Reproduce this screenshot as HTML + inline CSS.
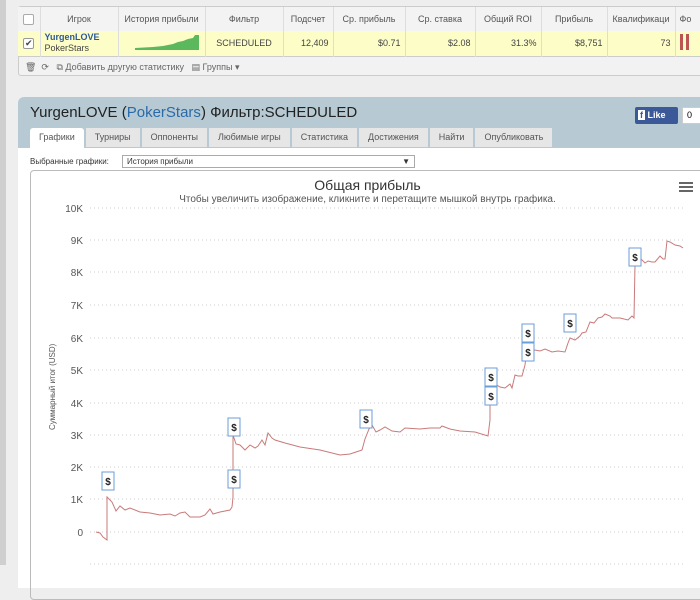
<!DOCTYPE html>
<html><head><meta charset="utf-8"><style>
*{margin:0;padding:0;box-sizing:border-box}
body{width:700px;height:565px;overflow:hidden;background:#eeeeee;font-family:"Liberation Sans","DejaVu Sans",sans-serif;position:relative}
.abs{position:absolute}
table{border-collapse:collapse;font-size:9px;color:#444}
td{border-right:1px solid #ddd;height:24px;padding:0 4px}
</style></head><body>
<div class="abs" style="left:0;top:0;width:6px;height:565px;background:#cfcfcf"></div>
<div class="abs" style="left:18px;top:6px;width:690px;height:70px;background:#f2f2f2;border:1px solid #ccc;border-radius:3px"></div>
<table class="abs" style="left:18px;top:7px;width:690px;table-layout:fixed">
<colgroup><col style="width:22px"><col style="width:78px"><col style="width:87px"><col style="width:78px"><col style="width:50px"><col style="width:72px"><col style="width:70px"><col style="width:66px"><col style="width:66px"><col style="width:68px"><col style="width:33px"></colgroup>
<tr style="background:#f3f3f3;height:23px;text-align:center;color:#555">
<td><div style="width:11px;height:11px;border:1px solid #aaa;background:#fff;border-radius:2px;margin:auto"></div></td>
<td>Игрок</td><td>История прибыли</td><td>Фильтр</td><td>Подсчет</td><td>Ср. прибыль</td><td>Ср. ставка</td><td>Общий ROI</td><td>Прибыль</td><td>Квалификаци</td><td style="text-align:left">Фо</td></tr>
<tr style="background:#fdfdc8;height:25px;border-bottom:1px solid #ccc">
<td><div style="width:11px;height:11px;border:1px solid #999;background:#fff;border-radius:2px;margin:auto;font-size:9px;line-height:9px;text-align:center">✔</div></td>
<td style="line-height:11px"><b style="color:#2c5a9a">YurgenLOVE</b><br>PokerStars</td>
<td><svg width="78" height="20"><polygon points="12,18 12,16 30,15 40,14 50,12 55,10 60,9 65,7 70,6 72,3 76,3 76,18" fill="#5cb85c"/></svg></td>
<td style="text-align:center">SCHEDULED</td><td style="text-align:right">12,409</td><td style="text-align:right">$0.71</td><td style="text-align:right">$2.08</td><td style="text-align:right">31.3%</td><td style="text-align:right">$8,751</td><td style="text-align:right">73</td>
<td><span style="display:inline-block;width:3px;height:16px;background:#b55;margin-right:3px"></span><span style="display:inline-block;width:3px;height:16px;background:#b55"></span></td></tr>
</table>
<div class="abs" style="left:25px;top:62px;font-size:9px;color:#666">🗑 &nbsp;⟳ &nbsp; ⧉ Добавить другую статистику &nbsp; ▤ Группы ▾</div>

<div class="abs" style="left:18px;top:97px;width:690px;height:480px;background:#b7cad3;border-radius:6px 0 0 0"></div>
<div class="abs" style="left:30px;top:104px;font-size:15px;color:#222">YurgenLOVE (<span style="color:#2a6aaa">PokerStars</span>) Фильтр:SCHEDULED</div>
<div class="abs" style="left:635px;top:107px;width:43px;height:17px;background:#3b5998;color:#fff;font-size:9px;font-weight:bold;line-height:17px;padding-left:3px;border-radius:2px"><span style="background:#fff;color:#3b5998;padding:0 2px">f</span> Like</div>
<div class="abs" style="left:682px;top:107px;width:20px;height:17px;background:#fff;border:1px solid #ccc;font-size:9px;line-height:15px;padding-left:4px">0</div>
<div class="abs" style="left:18px;top:148px;width:690px;height:440px;background:#fff"></div>
<div class="abs" style="left:30px;top:128px;font-size:9px;color:#555;display:flex;gap:2px">
<div style="background:#fff;padding:4px 9px;height:20px;border-radius:3px 3px 0 0">Графики</div>
<div style="background:#e6e6e6;padding:4px 9px;height:19px">Турниры</div>
<div style="background:#e6e6e6;padding:4px 9px;height:19px">Оппоненты</div>
<div style="background:#e6e6e6;padding:4px 9px;height:19px">Любимые игры</div>
<div style="background:#e6e6e6;padding:4px 9px;height:19px">Статистика</div>
<div style="background:#e6e6e6;padding:4px 9px;height:19px">Достижения</div>
<div style="background:#e6e6e6;padding:4px 9px;height:19px">Найти</div>
<div style="background:#e6e6e6;padding:4px 9px;height:19px">Опубликовать</div>
</div>
<div class="abs" style="left:30px;top:157px;font-size:8px;color:#333">Выбранные графики:</div>
<div class="abs" style="left:122px;top:155px;width:293px;height:13px;border:1px solid #aaa;font-size:8px;padding-left:4px;line-height:11px;color:#333">История прибыли<span style="position:absolute;right:4px">▼</span></div>
<div class="abs" style="left:30px;top:170px;width:680px;height:430px;border:1px solid #bbb;border-radius:4px"></div>
<div class="abs" style="left:0;top:177px;width:735px;text-align:center;font-size:14px;color:#333">Общая прибыль</div>
<div class="abs" style="left:0;top:194px;width:735px;text-align:center;font-size:10px;color:#555">Чтобы увеличить изображение, кликните и перетащите мышкой внутрь графика.</div>
<div class="abs" style="left:679px;top:182px;width:14px"><div style="height:2px;background:#666;margin-bottom:2px"></div><div style="height:2px;background:#666;margin-bottom:2px"></div><div style="height:2px;background:#666"></div></div>
<svg class="abs" style="left:0;top:0" width="700" height="565">
<g stroke="#ccc" stroke-dasharray="1,3">
<line x1="90" x2="685" y1="208" y2="208"/><line x1="90" x2="685" y1="240" y2="240"/><line x1="90" x2="685" y1="272" y2="272"/><line x1="90" x2="685" y1="305" y2="305"/><line x1="90" x2="685" y1="338" y2="338"/><line x1="90" x2="685" y1="370" y2="370"/><line x1="90" x2="685" y1="403" y2="403"/><line x1="90" x2="685" y1="435" y2="435"/><line x1="90" x2="685" y1="467" y2="467"/><line x1="90" x2="685" y1="499" y2="499"/><line x1="90" x2="685" y1="532" y2="532"/><line x1="90" x2="685" y1="564" y2="564"/>
</g>
<g font-size="10" fill="#555" text-anchor="end">
<text x="83" y="212">10K</text><text x="83" y="244">9K</text><text x="83" y="276">8K</text><text x="83" y="309">7K</text><text x="83" y="342">6K</text><text x="83" y="374">5K</text><text x="83" y="407">4K</text><text x="83" y="439">3K</text><text x="83" y="471">2K</text><text x="83" y="503">1K</text><text x="83" y="536">0</text>
</g>
<text transform="translate(55,430) rotate(-90)" font-size="8" fill="#555">Суммарный итог (USD)</text>
<polyline fill="none" stroke="#c97a7a" stroke-width="1" points="96,532 100,533 103,537 107,540 107,497 112,502 116,511 120,506 125,510 130,508 140,512 150,513 160,515 170,514 175,516 180,513 185,512 190,517 200,517 205,515 210,509 213,514 220,512 230,510 232,507 233,497 233,435 236,444 240,445 245,450 250,445 255,448 258,446 262,440 265,445 268,433 272,438 275,440 285,443 300,447 320,450 340,455 350,454 356,452 362,450 365,439 369,429 372,425 376,432 380,430 385,427 392,431 400,432 405,428 420,429 430,428 440,428 442,426 450,429 460,431 475,432 488,436 490,420 490,398 495,384 500,387 505,388 510,384 512,388 515,375 518,376 522,376 525,365 527,350 532,352 535,350 540,351 545,349 552,352 558,351 565,352 568,343 570,338 575,340 580,336 582,333 586,332 590,322 594,323 598,318 602,317 605,314 610,316 612,318 620,318 628,320 632,316 634,318 635,265 640,258 645,263 648,261 652,262 655,262 660,256 663,259 665,259 667,241 670,242 675,245 680,246 683,248"/>
<g font-size="10" font-weight="bold" fill="#222" text-anchor="middle">
<g><rect x="102" y="472" width="12" height="18" fill="#fff" stroke="#6a9ed8"/><text x="108" y="485">$</text></g>
<g><rect x="228" y="470" width="12" height="18" fill="#fff" stroke="#6a9ed8"/><text x="234" y="483">$</text></g>
<g><rect x="228" y="418" width="12" height="18" fill="#fff" stroke="#6a9ed8"/><text x="234" y="431">$</text></g>
<g><rect x="360" y="410" width="12" height="18" fill="#fff" stroke="#6a9ed8"/><text x="366" y="423">$</text></g>
<g><rect x="485" y="387" width="12" height="18" fill="#fff" stroke="#6a9ed8"/><text x="491" y="400">$</text></g>
<g><rect x="485" y="368" width="12" height="18" fill="#fff" stroke="#6a9ed8"/><text x="491" y="381">$</text></g>
<g><rect x="522" y="324" width="12" height="18" fill="#fff" stroke="#6a9ed8"/><text x="528" y="337">$</text></g>
<g><rect x="522" y="343" width="12" height="18" fill="#fff" stroke="#6a9ed8"/><text x="528" y="356">$</text></g>
<g><rect x="564" y="314" width="12" height="18" fill="#fff" stroke="#6a9ed8"/><text x="570" y="327">$</text></g>
<g><rect x="629" y="248" width="12" height="18" fill="#fff" stroke="#6a9ed8"/><text x="635" y="261">$</text></g>
</g>
</svg>
</body></html>
